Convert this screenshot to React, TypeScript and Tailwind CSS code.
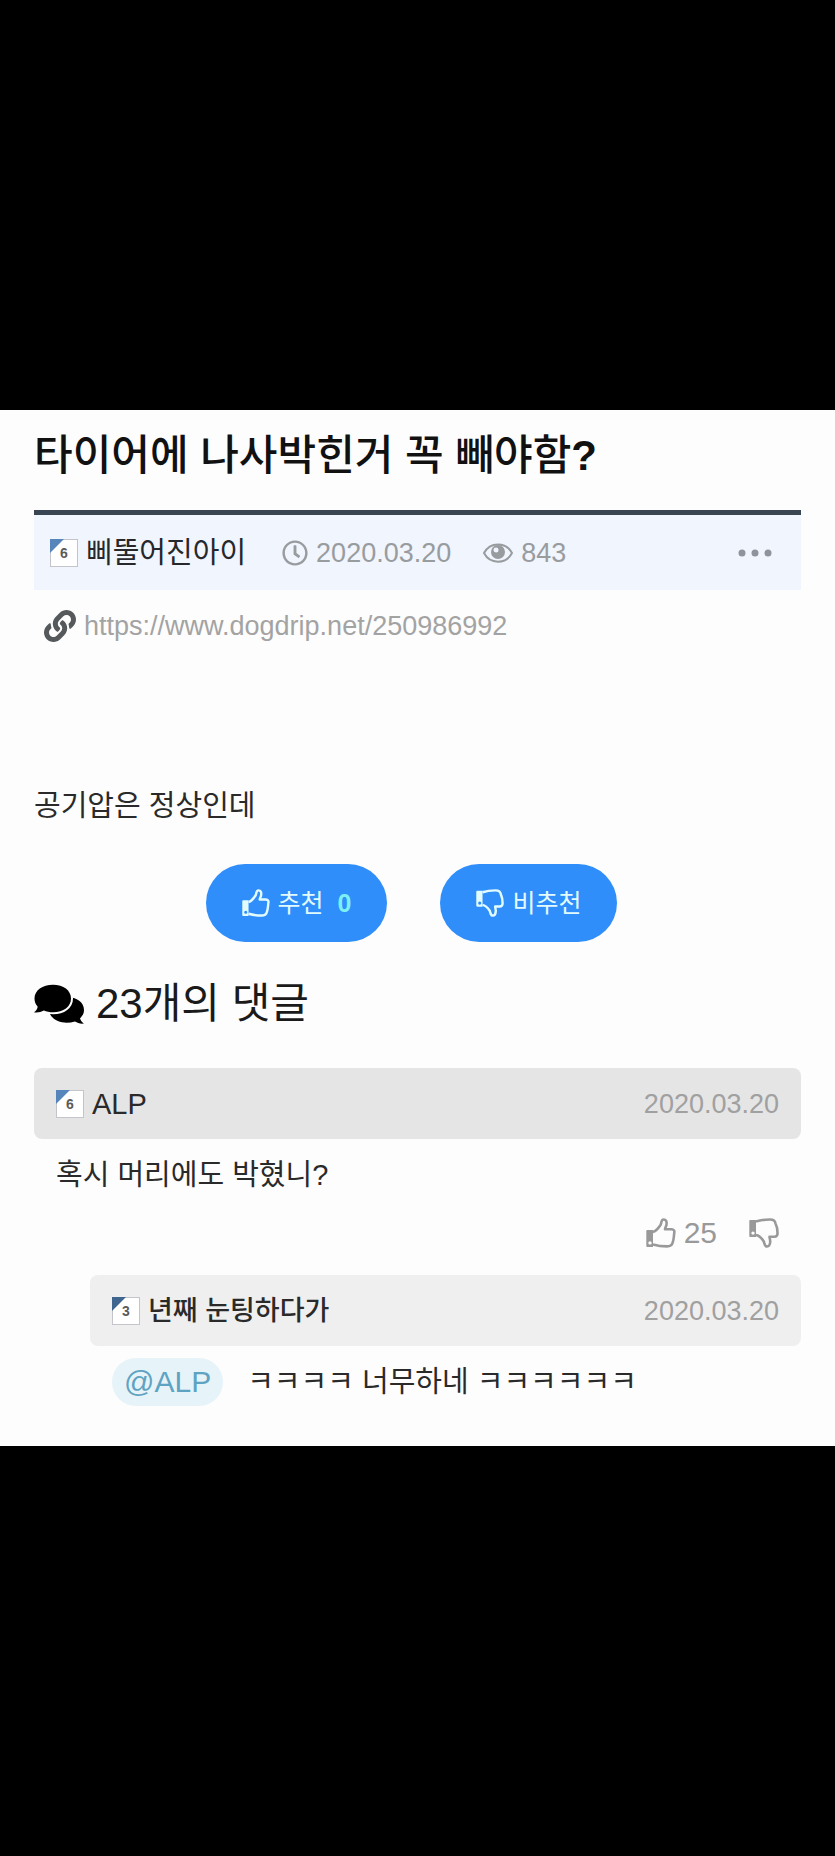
import { FaLink, FaRegClock } from "react-icons/fa";

type BadgeProps = {
  level: number;
  tone: string;
};

function LevelBadge({ level, tone }: BadgeProps) {
  return (
    <span className="relative flex size-7 shrink-0 items-center justify-center border border-[#c3c5ca] bg-white font-['Liberation_Sans',sans-serif] text-sm font-bold text-[#5c5b58]">
      <svg viewBox="0 0 14 14" className={`absolute -top-px -left-px size-3.5 ${tone}`} aria-hidden="true">
        <path d="M0 0h14L0 14z" fill="currentColor" />
      </svg>
      {level}
    </span>
  );
}

function ThumbUpIcon({ className }: { className: string }) {
  return (
    <svg viewBox="0 0 30 30" className={className} fill="none" aria-hidden="true">
      <path
        d="M1.5 12H7v17H1.5C.7 29 .3 28.6.3 27.8V13.2C.3 12.4.7 12 1.5 12zM4 23.2a1.7 1.7 0 1 0 0 3.4a1.7 1.7 0 0 0 0-3.4z"
        fill="currentColor"
        fillRule="evenodd"
      />
      <path
        d="M7 14C10 13.5 12.5 10 14.5 7C15.7 5 15 1.5 17.500 1.5C20.5 1.5 20.8 4 20.5 6.5C20.3 8.5 19 9.8 19 11.3H25.5C28 11.3 28.8 13 28.2 15C28 18 27.7 22 26.500 25C25.7 28 24 28.4 21 28.4C15 28.4 11.5 27.8 7 26.5"
        stroke="currentColor"
        strokeWidth="2.6"
        strokeLinejoin="round"
      />
    </svg>
  );
}

function ThumbDownIcon({ className }: { className: string }) {
  return (
    <svg viewBox="0 0 30 30" className={className} fill="none" aria-hidden="true">
      <path
        d="M1.5 2H7V19H1.5C.7 19 .3 18.6.3 17.8V3.2C.3 2.4.7 2 1.5 2zM4 13.4a1.7 1.7 0 1 0 0 3.4a1.7 1.7 0 0 0 0-3.4z"
        fill="currentColor"
        fillRule="evenodd"
      />
      <path
        d="M7 3.5C11.5 2 15 1.5 21 1.5C24.5 1.5 26.2 2.8 26.5 5.5C28 8.5 28.6 12 28.5 15.5C28.4 17.8 27.5 18.7 25.5 18.7H20.5C20.5 20.2 21.3 21.5 21.2 24C21 26.8 20.3 28.5 18 28.5C15.3 28.5 15.7 25 14.5 23C12.5 20 10 17.5 7 17"
        stroke="currentColor"
        strokeWidth="2.6"
        strokeLinejoin="round"
      />
    </svg>
  );
}

function EyeIcon() {
  return (
    <svg viewBox="0 0 30 20" className="h-5 w-[30px]" fill="none" aria-hidden="true">
      <path d="M1 10C7 -1.5 23 -1.5 29 10C23 21.5 7 21.5 1 10z" stroke="currentColor" strokeWidth="2" />
      <path
        d="M15 2a7 7 0 1 0 0 14a7 7 0 0 0 0-14zM13 4.5a2.5 2.5 0 1 1 0 5a2.5 2.5 0 0 1 0-5z"
        fill="currentColor"
        fillRule="evenodd"
      />
    </svg>
  );
}

function CommentsIcon() {
  return (
    <svg viewBox="0 0 50 40" className="h-10 w-[50px] text-black" fill="currentColor" aria-hidden="true">
      <path d="M33 13C43 13 50 18.5 50 26C50 29.5 48.5 32 46 34.2C46.5 36.5 48 38 50 39.5C46.5 40 43.5 39 41 37.5C31 40.5 20 38 16 30z" />
      <path
        d="M19 .8C29.5.8 37 6.5 37 14.5C37 22.5 29.5 28.3 19 28.3C15.5 28.3 12.5 27.7 9.8 26.5C7 28 3.5 29 0 28.3C2 26.7 3.2 25.2 3.7 22.7C1.5 20.3.5 17.7.5 14.5C.5 6.5 8.5.8 19 .8z"
        stroke="#fdfdfd"
        strokeWidth="4"
        paintOrder="stroke"
      />
    </svg>
  );
}

function MoreIcon() {
  return (
    <svg viewBox="0 0 36 8" className="h-2 w-9" fill="currentColor" aria-hidden="true">
      <circle cx="5" cy="4" r="3.5" />
      <circle cx="18" cy="4" r="3.5" />
      <circle cx="31" cy="4" r="3.5" />
    </svg>
  );
}

export default function App() {
  return (
    <div className="flex min-h-screen flex-col justify-center bg-black font-['Liberation_Sans','Noto_Sans_CJK_KR',sans-serif] text-[29px] leading-10 text-[#2a2a2a]">
      <main className="bg-[#fdfdfd] px-[34px] pb-10">
        <article>
          <h1 className="pt-4 pb-6 text-[42px] leading-[60px] font-medium text-[#111]">
            타이어에 나사박힌거 꼭 빼야함<span className="font-bold">?</span>
          </h1>

          <div className="flex h-20 items-center border-t-5 border-[#3a4554] bg-[#f0f5fe] px-4 text-[27px] text-[#999c9f]">
            <LevelBadge level={6} tone="text-[#5585bb]" />
            <span className="ml-2 text-[29px] text-[#26282c]">삐뚤어진아이</span>
            <span className="ml-9 flex items-center gap-2">
              <FaRegClock className="size-[26px]" />
              <time dateTime="2020-03-20">2020.03.20</time>
            </span>
            <span className="ml-8 flex items-center gap-2">
              <EyeIcon />
              843
            </span>
            <button type="button" aria-label="더보기" className="ml-auto px-3 text-[#8f939c]">
              <MoreIcon />
            </button>
          </div>

          <div className="mt-4 flex items-center gap-2 px-2.5 text-[27px]">
            <FaLink className="size-8 text-[#55595c]" />
            <a href="https://www.dogdrip.net/250986992" className="text-[#a3a3a3]">
              https://www.dogdrip.net/250986992
            </a>
          </div>

          <p className="mt-[140px]">공기압은 정상인데</p>

          <div className="mt-[38px] flex justify-center gap-[53px] pr-3 text-[25px] text-[#e2fbff]">
            <button type="button" className="flex h-[78px] items-center gap-2 rounded-full bg-[#2f8efa] px-9">
              <ThumbUpIcon className="size-7" />
              추천
              <span className="ml-1.5 font-bold text-[#7df0f2]">0</span>
            </button>
            <button type="button" className="flex h-[78px] items-center gap-2 rounded-full bg-[#2f8efa] px-9">
              <ThumbDownIcon className="size-7" />
              비추천
            </button>
          </div>
        </article>

        <section>
          <h2 className="mt-8 flex items-center gap-3 text-[42px] leading-[60px] text-[#1a1a1a]">
            <CommentsIcon />
            23개의 댓글
          </h2>

          <div className="mt-[34px] flex h-[71px] items-center rounded-lg bg-[#e5e5e5] px-[22px]">
            <LevelBadge level={6} tone="text-[#5585bb]" />
            <span className="ml-2">ALP</span>
            <time dateTime="2020-03-20" className="ml-auto text-[27px] text-[#a0a0a0]">
              2020.03.20
            </time>
          </div>
          <p className="mt-4 px-[22px]">혹시 머리에도 박혔니?</p>
          <div className="mt-[18px] flex justify-end gap-8 px-[22px] text-[30px] text-[#999]">
            <button type="button" className="flex items-center gap-2">
              <ThumbUpIcon className="size-[30px]" />
              25
            </button>
            <button type="button" aria-label="비추천">
              <ThumbDownIcon className="size-[30px]" />
            </button>
          </div>

          <div className="mt-[22px] ml-14">
            <div className="flex h-[71px] items-center rounded-lg bg-[#efefef] px-[22px]">
              <LevelBadge level={3} tone="text-[#3f668f]" />
              <span className="ml-2 text-[27px] font-medium">년째 눈팅하다가</span>
              <time dateTime="2020-03-20" className="ml-auto text-[27px] text-[#a0a0a0]">
                2020.03.20
              </time>
            </div>
            <div className="mt-3 flex items-center gap-6 px-[22px]">
              <a href="#alp" className="rounded-full bg-[#e6f4f9] px-3 py-1 text-[30px] text-[#5fa3c2]">
                @ALP
              </a>
              <p>ㅋㅋㅋㅋ 너무하네 ㅋㅋㅋㅋㅋㅋ</p>
            </div>
          </div>
        </section>
      </main>
    </div>
  );
}
